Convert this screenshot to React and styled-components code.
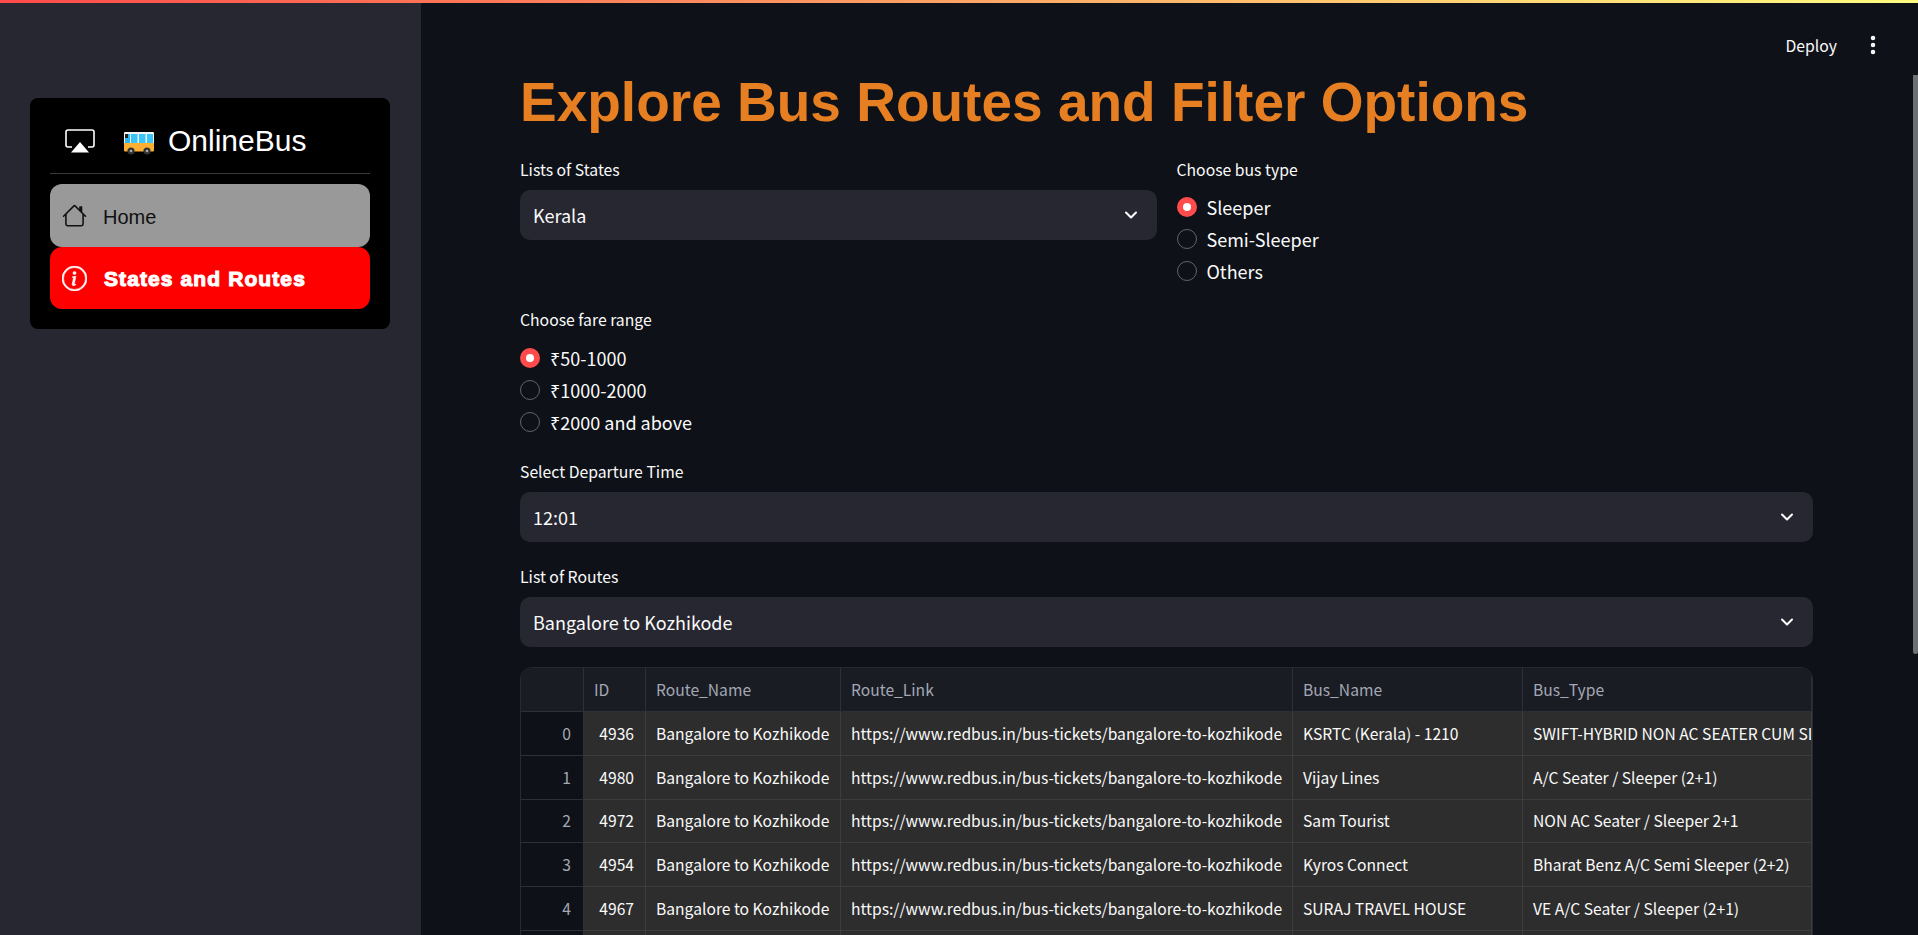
import React from 'react';
import styled, { createGlobalStyle } from 'styled-components';
import { ChevronDown, MoreVertical } from 'lucide-react';
import { BsHouse, BsInfoCircle } from 'react-icons/bs';

const GlobalStyle = createGlobalStyle`
  html, body {
    margin: 0;
    height: 100%;
    overflow: hidden;
    background: #0e1117;
  }
  * { box-sizing: border-box; }
`;

const UI_FONT = '"Noto Sans CJK SC", "Noto Sans", sans-serif';

const Page = styled.div`
  display: flex;
  height: 935px;
  position: relative;
  overflow: hidden;
  font-family: ${UI_FONT};
  color: #fafafa;
`;

const TopLine = styled.div`
  position: absolute;
  top: 0;
  left: 0;
  right: 0;
  height: 3px;
  background: linear-gradient(90deg, #ff4b4b, #fffd80);
  z-index: 3;
`;

const Sidebar = styled.aside`
  width: 421px;
  flex: none;
  background: #262730;
  padding: 98px 31px 0 30px;
`;

const NavCard = styled.nav`
  background: #000;
  border-radius: 8px;
  padding: 20px;
  height: 231px;
`;

const NavHeader = styled.div`
  display: flex;
  align-items: center;
  height: 56px;
  padding: 0 0 10px 15px;
  border-bottom: 1px solid #3a3a3a;
  font-family: "Liberation Sans", Arial, sans-serif;
  font-size: 30px;
  color: #fff;
`;

const BusMark = styled.svg`
  margin: 5px 14px 0 29px;
`;

const NavList = styled.div`
  margin-top: 10px;
`;

const NavItem = styled.div`
  display: flex;
  align-items: center;
  height: ${(p) => (p.$active ? 62 : 63)}px;
  padding-left: 12px;
  gap: ${(p) => (p.$active ? 17 : 16)}px;
  border-radius: 12px;
  font-family: "Liberation Sans", Arial, sans-serif;
  font-size: ${(p) => (p.$active ? 21 : 20)}px;
  background: ${(p) => (p.$active ? '#ff0000' : '#999999')};
  color: ${(p) => (p.$active ? '#fff' : '#111')};
  font-weight: ${(p) => (p.$active ? 700 : 400)};
  letter-spacing: ${(p) => (p.$active ? '1.1px' : '0')};
  -webkit-text-stroke: ${(p) => (p.$active ? '1.1px #fff' : '0')};
`;

const NavText = styled.span`
  position: relative;
  top: ${(p) => (p.$low ? 2 : 1)}px;
`;

const Main = styled.main`
  flex: 1;
  min-width: 0;
  position: relative;
  padding: 0 105px 0 99px;
`;

const Toolbar = styled.div`
  position: absolute;
  top: 33px;
  right: 33px;
  display: flex;
  align-items: center;
  gap: 24px;
  height: 24px;
  font-size: 15.75px;
`;

const ScrollThumb = styled.div`
  position: absolute;
  top: 75px;
  right: 0;
  width: 5px;
  height: 579px;
  border-radius: 0 0 3px 3px;
  background: #6e6f73;
`;

const Title = styled.h1`
  margin: 0;
  padding-top: 67px;
  font-family: "Liberation Sans", Arial, sans-serif;
  font-size: 55px;
  line-height: 70px;
  font-weight: 700;
  color: #e67e22;
  white-space: nowrap;
`;

const Columns = styled.div`
  display: grid;
  grid-template-columns: 1fr 1fr;
  gap: 20px;
  margin-top: 21px;
`;

const Field = styled.div`
  margin-top: ${(p) => p.$top}px;
`;

const Label = styled.div`
  font-size: 15.75px;
  line-height: 24px;
  height: 32px;
  color: #fafafa;
`;

const SelectBox = styled.div`
  height: 50px;
  border-radius: 10px;
  background: #262730;
  display: flex;
  align-items: center;
  justify-content: space-between;
  padding: 0 16px 0 13px;
  font-size: 18px;
`;

const RadioGroup = styled.div`
  display: flex;
  flex-direction: column;
  padding-top: ${(p) => p.$pad}px;
`;

const RadioRow = styled.div`
  display: flex;
  align-items: center;
  gap: 10px;
  height: 32px;
  font-size: 18px;
`;

const RadioDot = styled.span`
  width: 20px;
  height: 20px;
  border-radius: 50%;
  flex: none;
  ${(p) =>
    p.$on
      ? 'background: #ff4b4b; display: flex; align-items: center; justify-content: center;'
      : 'background: #0e1117; border: 1px solid #62646e;'}
  &::after {
    content: '';
    display: ${(p) => (p.$on ? 'block' : 'none')};
    width: 8px;
    height: 8px;
    border-radius: 50%;
    background: #fff;
  }
`;

const TableWrap = styled.div`
  margin-top: 20px;
  height: 320px;
  border: 1px solid #262a33;
  border-radius: 12px 12px 0 0;
  overflow: hidden;
  font-size: 15.65px;
`;

const Row = styled.div`
  display: grid;
  grid-template-columns: 63px 62px 195px 452px 230px 1fr;
  height: ${(p) => (p.$head ? 44 : 43.75)}px;
`;

const Cell = styled.div`
  display: flex;
  align-items: center;
  min-width: 0;
  overflow: hidden;
  white-space: nowrap;
  padding: 0 ${(p) => (p.$last ? 0 : p.$num ? 11 : 9)}px 0 10px;
  border-right: 1px solid #3d3d3d;
  border-bottom: 1px solid #3d3d3d;
  background: #2d2d2d;
  color: #fafafa;
  justify-content: ${(p) => (p.$num ? 'flex-end' : 'flex-start')};
`;

const HeadCell = styled(Cell)`
  background: #1a1c24;
  color: #a3a8b4;
  border-color: #2d3039;
`;

const IndexCell = styled(Cell)`
  background: #0e1117;
  color: #a3a8b4;
  justify-content: flex-end;
  border-color: #2d3039;
  padding-right: 12px;
`;

const COLUMNS = ['ID', 'Route_Name', 'Route_Link', 'Bus_Name', 'Bus_Type'];
const LINK = 'https://www.redbus.in/bus-tickets/bangalore-to-kozhikode';
const ROUTE = 'Bangalore to Kozhikode';
const ROWS = [
  ['4936', 'KSRTC (Kerala) - 1210', 'SWIFT-HYBRID NON AC SEATER CUM SLEEPER'],
  ['4980', 'Vijay Lines', 'A/C Seater / Sleeper (2+1)'],
  ['4972', 'Sam Tourist', 'NON AC Seater / Sleeper 2+1'],
  ['4954', 'Kyros Connect', 'Bharat Benz A/C Semi Sleeper (2+2)'],
  ['4967', 'SURAJ TRAVEL HOUSE', 'VE A/C Seater / Sleeper (2+1)'],
];

const Radios = ({ items, pad }) => (
  <RadioGroup $pad={pad}>
    {items.map((item, i) => (
      <RadioRow key={item}>
        <RadioDot $on={i === 0} />
        {item}
      </RadioRow>
    ))}
  </RadioGroup>
);

const Select = ({ value }) => (
  <SelectBox>
    {value}
    <ChevronDown size={20} strokeWidth={2.5} color="#fafafa" />
  </SelectBox>
);

const AirplayIcon = () => (
  <svg width="30" height="24" viewBox="0 0 30 24" fill="none">
    <path d="M7 18H3a2 2 0 0 1-2-2V3a2 2 0 0 1 2-2h24a2 2 0 0 1 2 2v13a2 2 0 0 1-2 2h-4" stroke="#fff" strokeWidth="1.6" />
    <path d="M15 13l9 10.5H6z" fill="#fff" />
  </svg>
);

const BusIcon = () => (
  <BusMark width="30" height="24" viewBox="0 0 30 24">
    <rect x="0" y="1" width="30" height="12" fill="#f4f4f4" rx="1" />
    <rect x="0" y="12" width="30" height="8.5" fill="#fbb034" rx="1" />
    <rect x="1" y="3" width="5" height="9" fill="#2bb6f0" />
    <rect x="7" y="3" width="6.5" height="9" fill="#37c5fa" />
    <rect x="15" y="3" width="6.5" height="9" fill="#37c5fa" />
    <rect x="23" y="3" width="6" height="9" fill="#37c5fa" />
    <rect x="1" y="3" width="3" height="4" fill="#222" />
    <circle cx="7" cy="20" r="3.6" fill="#333" />
    <circle cx="7" cy="20" r="1.3" fill="#aaa" />
    <circle cx="23" cy="20" r="3.6" fill="#333" />
    <circle cx="23" cy="20" r="1.3" fill="#aaa" />
  </BusMark>
);

const App = () => (
  <Page>
    <GlobalStyle />
    <TopLine />
    <Sidebar>
      <NavCard>
        <NavHeader>
          <AirplayIcon />
          <BusIcon />
          OnlineBus
        </NavHeader>
        <NavList>
          <NavItem>
            <BsHouse size={25} color="#111" />
            <NavText $low>Home</NavText>
          </NavItem>
          <NavItem $active>
            <BsInfoCircle size={25} color="#fff" stroke="#fff" strokeWidth={0.35} />
            <NavText>States and Routes</NavText>
          </NavItem>
        </NavList>
      </NavCard>
    </Sidebar>
    <Main>
      <Toolbar>
        Deploy
        <MoreVertical size={24} strokeWidth={2.5} color="#fafafa" />
      </Toolbar>
      <ScrollThumb />
      <Title>Explore Bus Routes and Filter Options</Title>
      <Columns>
        <div>
          <Label>Lists of States</Label>
          <Select value="Kerala" />
        </div>
        <div>
          <Label>Choose bus type</Label>
          <Radios pad={1} items={['Sleeper', 'Semi-Sleeper', 'Others']} />
        </div>
      </Columns>
      <Field $top={21}>
        <Label>Choose fare range</Label>
        <Radios pad={2} items={['₹50-1000', '₹1000-2000', '₹2000 and above']} />
      </Field>
      <Field $top={22}>
        <Label>Select Departure Time</Label>
        <Select value="12:01" />
      </Field>
      <Field $top={23}>
        <Label>List of Routes</Label>
        <Select value="Bangalore to Kozhikode" />
      </Field>
      <TableWrap>
        <Row $head>
          <HeadCell />
          {COLUMNS.map((c, i) => (
            <HeadCell key={c} $last={i === COLUMNS.length - 1}>{c}</HeadCell>
          ))}
        </Row>
        {ROWS.map((r, i) => (
          <Row key={r[0]}>
            <IndexCell>{i}</IndexCell>
            <Cell $num>{r[0]}</Cell>
            <Cell>{ROUTE}</Cell>
            <Cell>{LINK}</Cell>
            <Cell>{r[1]}</Cell>
            <Cell $last>{r[2]}</Cell>
          </Row>
        ))}
        <Row>
          <IndexCell />
          <Cell />
          <Cell />
          <Cell />
          <Cell />
          <Cell $last />
        </Row>
      </TableWrap>
    </Main>
  </Page>
);

export default App;
